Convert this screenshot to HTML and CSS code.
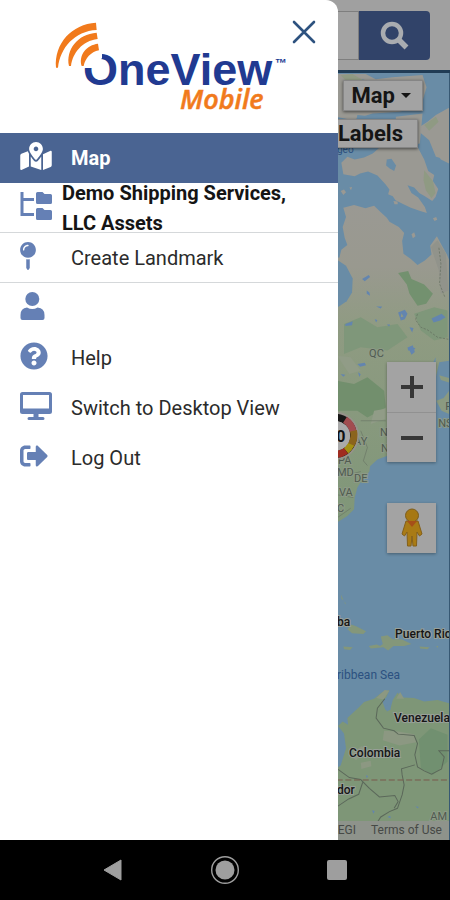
FILE: index.html
```html
<!DOCTYPE html>
<html lang="en">
<head>
<meta charset="utf-8">
<meta name="viewport" content="width=device-width, initial-scale=1">
<title>OneView Mobile</title>
<link rel="stylesheet" href="styles.css">
</head>
<body>
<div class="screen">
  <div class="stage">
    <main class="app">
      <form class="search">
        <input class="search-input" type="text" aria-label="Search">
        <button class="search-button" type="button" aria-label="Find">
          <svg viewBox="0 0 30 30" width="30" height="30"><circle cx="12" cy="12" r="9" fill="none" stroke="#a9acb0" stroke-width="4.5"/><path d="M18.500 18.500L26.500 26.500" stroke="#a9acb0" stroke-width="5.500"/></svg>
        </button>
      </form>
      <section class="map" aria-label="Map">
        <svg class="map-art" viewBox="338 73 112 767" preserveAspectRatio="xMaxYMin slice">
          <defs>
            <linearGradient id="tundra" x1="0" y1="0" x2="0" y2="1">
              <stop offset="0" stop-color="#9a9993"/><stop offset=".18" stop-color="#99998f"/><stop offset=".36" stop-color="#8f9b82"/><stop offset="1" stop-color="#7d9677"/>
            </linearGradient>
          </defs>
          <rect x="330" y="70" width="130" height="780" fill="#698ca6"/>
          <!-- Arctic islands -->
          <g transform="scale(.33333)" fill="#9a9993">
            <path d="M1010 222L1100 222L1130 238L1180 232L1270 225L1282 262L1265 320L1200 335L1120 340L1060 360L1010 350Z"/>
            <path d="M1360 320L1345 325L1310 345L1285 365L1262 380L1260 395L1290 420L1310 470L1350 480Z"/>
            <path d="M1190 350L1270 340L1262 430L1190 445Z"/>
          </g>
          <g transform="scale(.33333)" fill="#8f9a83">
            <path d="M1025 226L1060 222L1100 245L1090 262L1050 250Z"/><path d="M1275 375L1310 350L1318 365L1290 392Z"/>
          </g>
          <g transform="scale(.33333)" fill="#698ca6">
            <path d="M1090 238L1130 250L1200 240L1210 262L1150 275L1085 262Z"/><path d="M1075 345L1150 352L1180 372L1120 384L1070 370Z"/>
          </g>
          <g transform="translate(325 150) scale(.33333)">
            <path fill="#9a9993" d="M52 38L70 20L92 28L120 22L146 10L180 -20L280 -10L300 28L312 62L330 74L326 92L342 116L334 140L324 152L302 138L285 128L270 112L250 105L262 128L282 142L302 170L308 188L288 182L260 172L238 162L214 150L206 138L192 132L196 118L184 102L160 76L132 64L108 70L92 78L58 72Z"/>
            <path fill="#9a9993" d="M325 -20H375V40L350 28L338 10Z"/>
            <path fill="#698ca6" d="M188 28L202 26L216 46L210 62L196 54L186 46Z"/>
            <path fill="#8f9a83" d="M300 60L326 92L334 128L322 144L305 120L298 90Z"/>
            <path fill="#9a9993" d="M50 122l10 -4 6 8 -8 8zM76 112l8-2-3 10zM262 252l8-6 4 12-8 6zM326 204l10-4 3 8-8 4zM208 152l12 2 1 8-10 0z"/>
            <path fill="url(#tundra)" d="M58 172L90 164L124 174L150 166L170 186L188 202L196 214L224 230L240 248L234 272L238 310L260 326L280 344L302 330L322 312L318 286L338 258L352 284L368 312L375 330V795L340 800L334 620L210 900L170 990L130 1020L96 1070L70 1120L62 1150L58 1190L38 1180V320L46 322L52 298L70 284L62 262L56 230L66 200Z"/>
            <path fill="#698ca6" d="M35 325L66 346L86 384L84 426L68 452L35 474Z"/>
            <path fill="#91938b" d="M320 290L340 270L365 310L372 420L350 430L344 360Z"/>
            <path fill="#73916f" d="M222 368L252 362L262 386L300 402L326 430L306 460L280 466L256 430L248 402Z"/>
            <path fill="#7f977a" d="M60 520L110 500L160 530L220 520L250 560L190 600L110 590L60 610ZM270 490L330 470L370 480V560L330 570L290 540Z"/>
            <path fill="#6385af" d="M114 386l20-12 4 6-16 12zM128 420l8 6 2 10-10-6zM156 468l18 0-4 6zM64 520l22-8-2 12-20 2zM222 486l20-8 8 12-8 16-12 4zM232 488l-2 12 8-2zM322 504l30-14 12 10-16 10-20 6zM256 530l12 2-4 14zM188 522h10l-3 6zM152 506l8 2-4 8zM250 590l24 2-6 8-16 0z"/>
            <g fill="none" stroke="#636d5f" stroke-width="2" stroke-dasharray="7 4">
              <path d="M344 292L350 340L346 400L362 440"/><path d="M280 490L274 508L290 530L310 538L340 560L372 566"/>
            </g>
          </g>
          <!-- Great lakes coast, Quebec and the eastern seaboard -->
          <g transform="translate(325 340) scale(.33333)">
            <path fill="#698ca6" d="M375 60L345 65L335 110L336 240L300 300L250 345L190 345L160 356L138 376L136 392L112 420L100 440L92 470L90 505L70 525L38 545V680H375Z"/>
            <path fill="#8b9a80" d="M336 180L358 172L375 150V220L352 210Z"/>
            <path fill="#8b9a80" d="M345 104L375 112V126L350 118Z"/>
            <path fill="#728f6d" d="M38 120L90 130L130 110L180 150L185 200L130 230L100 210L38 210Z"/>
            <path fill="#919c87" d="M40 45L80 50L110 90L76 100ZM150 210L184 204V234L140 250Z"/>
            <path fill="#6385af" d="M100 70l22-4 4 8-18 4zM252 20l14-6 6 20-10 8zM102 95l8 6-4 8zM50 100l14 2-6 6z"/>
            <g fill="none" stroke="#697565" stroke-width="2"><path d="M110 240H185"/><path d="M110 270L130 320L118 360L130 374"/><path d="M38 400L80 400L110 392"/><path d="M42 462L88 470"/><path d="M40 530L80 502"/></g>
          </g>
          <g class="state">
            <text x="370" y="356">QC</text><text x="355" y="444">AY</text><text x="381" y="435">N</text><text x="382" y="451">N</text>
            <text x="339" y="463">PA</text><text x="338" y="475">MD</text><text x="355" y="481">DE</text><text x="340" y="495">VA</text><text x="338" y="511">C</text><text x="439" y="426">NS</text><text x="446" y="409">P</text>
          </g>
          <!-- Caribbean -->
          <g transform="translate(325 550) scale(.33333)" fill="#84977a">
            <path d="M70 234L82 220L98 226L126 240L118 248L84 246ZM58 286L86 288L78 296L60 294ZM134 284L158 280L168 284L176 278L170 256L190 252L206 264L232 264L262 278L240 284L208 284L192 298L178 288L140 292ZM286 286L316 288L310 294L288 292ZM336 284l6 0-2 6zM52 130l6 18-6-6zM62 150l4 10-4-4z"/>
          </g>
          <!-- South America -->
          <g transform="translate(325 690) scale(.33333)">
            <path fill="#7e9677" d="M38 230L50 222L66 170L60 126L42 104L56 90L72 100L70 80L104 48L120 32L150 22L172 4L196 -4L186 18L174 28L184 56L200 48L206 26L220 4L236 18L270 20L300 30L340 26L375 36V400H38Z"/>
            <path fill="#8c9882" d="M156 20L182 -4L196 -2L178 24ZM216 22L228 2L240 22ZM180 118L222 120L270 128L276 152L226 162L176 146ZM74 190L112 164L130 170L96 206ZM110 214L140 208L142 224L112 232Z"/>
            <path fill="#698ca6" d="M184 44L198 38L200 54L188 60Z"/>
            <path fill="#719070" d="M284 144L320 110L370 130V210L326 250L290 230Z"/>
            <g fill="none" stroke="#5b685a" stroke-width="3">
              <path d="M182 22L160 50L156 80L178 110L210 118L222 128L270 132L280 156L272 190L280 226L300 238L322 248L352 232L360 196L344 178L375 178"/><path d="M272 220L232 232L234 250L240 280L234 310L220 350L196 360L170 376L156 398"/><path d="M40 232L76 258L110 264L136 290L166 316L212 312L222 330L210 350"/><path d="M38 346L74 322L104 308L116 272"/>
            </g>
            <path d="M38 265H375" stroke="#78584c" stroke-width="3" stroke-dasharray="18 8"/>
            <path fill="#6385af" d="M144 356l8 2-4 8zM190 376l8-4 2 8zM274 344l10 2-4 4zM126 250l6 4-4 6z"/>
          </g>
          <g class="place">
            <text x="338" y="625">ba</text><text x="396" y="637">Puerto Rico</text><text x="395" y="721">Venezuela</text><text x="350" y="755">Colombia</text><text x="338" y="792">dor</text>
          </g>
          <text class="sea" x="338" y="678">ribbean Sea</text>
          <text class="sea bay" x="338" y="153">geo</text>
          <g class="state"><text x="431" y="818">AM</text></g>
          <g>
            <circle cx="336" cy="435" r="24" fill="#96938b"/>
            <circle cx="336" cy="435" r="18.500" fill="none" stroke="#171717" stroke-width="7"/>
            <path d="M346 419A18.500 18.500 0 0 1 354 431" fill="none" stroke="#a14d50" stroke-width="7"/>
            <path d="M354.500 430A18.500 18.500 0 0 1 352 444" fill="none" stroke="#8b641c" stroke-width="7"/>
            <path d="M352 443.500A18.500 18.500 0 0 1 347 450" fill="none" stroke="#a39013" stroke-width="7"/>
            <path d="M347 450A18.500 18.500 0 0 1 330 452" fill="none" stroke="#a02c20" stroke-width="7"/>
            <circle cx="336" cy="435" r="15" fill="#aaa"/>
            <text class="count" x="328" y="441">10</text>
          </g>
        </svg>
        <div class="map-options">
          <button class="option" type="button">Map <span class="caret"></span></button>
          <button class="option labels" type="button">Labels</button>
        </div>
        <div class="zoom">
          <button type="button" aria-label="Zoom in"><svg width="24" height="24" viewBox="0 0 24 24"><path d="M12 1V23M1 12H23" stroke="#373737" stroke-width="4"/></svg></button>
          <button type="button" aria-label="Zoom out"><svg width="24" height="24" viewBox="0 0 24 24"><path d="M1 12H23" stroke="#373737" stroke-width="4"/></svg></button>
        </div>
        <button class="pegman" type="button" aria-label="Street View">
          <svg width="24" height="40" viewBox="0 0 24 40"><path d="M6 13H18L22 26L19.500 28L17 24L16.500 38H13L12 28L11 38H7.500L7 24L4.500 28L2 26Z" fill="#a97b15" stroke="#84601a"/><circle cx="12" cy="7.500" r="6.500" fill="#a67813" stroke="#7d5d1b"/><path d="M7 13H17L12 19Z" fill="#a65019"/></svg>
        </button>
        <div class="attribution"><span>EGI</span><a href="#terms">Terms of Use</a></div>
      </section>
    </main>

    <aside class="drawer">
      <header class="brand">
        <svg class="logo" viewBox="50 15 240 105" width="240" height="105" role="img" aria-label="OneView Mobile">
          <text class="logo-name" x="83" y="85">OneView</text>
          <path d="M78 44H102V58L95 68H78Z" fill="#fff"/>
          <g transform="translate(40 0) scale(.33333)" fill="#f17a1c">
            <path d="M168 68C96 72 42 130 48 203L54 203C60 144 104 93 170 90Z"/><path d="M170 98C112 102 77 150 87 198L93 198C98 159 126 123 173 117Z"/><path d="M174 131C140 135 115 165 125 198L131 198C136 175 152 156 177 151Z"/>
          </g>
          <text class="logo-tm" x="275" y="67">™</text>
          <text class="logo-sub" x="180" y="109">Mobile</text>
        </svg>
        <button class="close" type="button" aria-label="Close menu"><svg width="24" height="24" viewBox="0 0 24 24"><path d="M2 2L22 22M22 2L2 22" stroke="#2d527f" stroke-width="2.600" stroke-linecap="round"/></svg></button>
      </header>
      <nav class="menu">
        <a class="item active" href="#map"><span class="icon"><svg width="32" height="28" viewBox="0 0 576 512"><path d="M288 0c-69.590 0-126 56.410-126 126 0 56.260 82.350 158.800 113.900 196.020 6.390 7.540 17.820 7.540 24.200 0C331.650 284.800 414 182.260 414 126 414 56.410 357.590 0 288 0zm0 168c-23.200 0-42-18.800-42-42s18.800-42 42-42 42 18.800 42 42-18.800 42-42 42zM20.120 215.950A32 32 0 0 0 0 245.660v250.320c0 11.320 11.430 19.060 21.940 14.860L160 448V214.920c-8.840-15.980-16.070-31.540-21.250-46.420L20.120 215.950zM288 359.670c-14.070 0-27.380-6.180-36.510-16.960-19.660-23.200-40.570-49.620-59.490-76.720v182l192 64V266c-18.920 27.090-39.820 53.520-59.490 76.720-9.130 10.770-22.440 16.950-36.510 16.950zm266.060-198.510L416 224v288l139.880-55.950A32 32 0 0 0 576 426.340V176.020c0-11.320-11.430-19.060-21.940-14.860z"/></svg></span><span>Map</span></a>
        <a class="item assets" href="#assets"><span class="icon"><svg width="32" height="28" viewBox="0 0 32 28"><path d="M2 0V22.500H14M2 7.500H14" fill="none" stroke="currentColor" stroke-width="3"/><path d="M17.500 0h5l2 2h6q1.500 0 1.500 1.500v7q0 1.500-1.500 1.500h-13q-1.500 0-1.500-1.500v-9q0-1.500 1.500-1.500zM17.500 16h5l2 2h6q1.500 0 1.500 1.500v7q0 1.500-1.500 1.500h-13q-1.500 0-1.500-1.500v-9q0-1.500 1.500-1.500z"/></svg></span><span>Demo Shipping Services, LLC Assets</span></a>
        <a class="item lined" href="#landmark"><span class="icon"><svg width="16" height="28" viewBox="0 0 288 512"><path d="M112 316.940v156.690l22.020 33.020c4.750 7.120 15.220 7.120 19.970 0L176 473.630V316.940c-10.390 1.920-21.060 3.060-32 3.060s-21.610-1.140-32-3.060zM144 0C64.470 0 0 64.470 0 144s64.470 144 144 144 144-64.470 144-144S223.530 0 144 0zm0 76c-37.500 0-68 30.500-68 68 0 6.620-5.380 12-12 12s-12-5.380-12-12c0-50.730 41.280-92 92-92 6.620 0 12 5.380 12 12s-5.380 12-12 12z"/></svg></span><span>Create Landmark</span></a>
        <a class="item" href="#account" aria-label="Account"><span class="icon"><svg width="25" height="28" viewBox="0 0 25 28"><circle cx="12.300" cy="7" r="7"/><path d="M7 15.500Q12.300 18.500 17.600 15.500Q24.500 16 24.500 23V26Q24.500 28 22.500 28H2.500Q0.500 28 0.500 26V23Q0.500 16 7 15.500Z"/></svg></span></a>
        <a class="item" href="#help"><span class="icon"><svg width="28" height="28" viewBox="0 0 512 512"><path d="M504 256c0 136.997-111.043 248-248 248S8 392.997 8 256C8 119.083 119.043 8 256 8s248 111.083 248 248zM262.655 90c-54.497 0-89.255 22.957-116.549 63.758-3.536 5.286-2.353 12.415 2.715 16.258l34.699 26.310c5.205 3.947 12.621 3.008 16.665-2.122 17.864-22.658 30.113-35.797 57.303-35.797 20.429 0 45.698 13.148 45.698 32.958 0 14.976-12.363 22.667-32.534 33.976C247.128 238.528 216 254.941 216 296v4c0 6.627 5.373 12 12 12h56c6.627 0 12-5.373 12-12v-1.333c0-28.462 83.186-29.647 83.186-106.667 0-58.002-60.165-102-116.531-102zM256 338c-25.365 0-46 20.635-46 46 0 25.364 20.635 46 46 46s46-20.636 46-46c0-25.365-20.635-46-46-46z"/></svg></span><span>Help</span></a>
        <a class="item" href="#desktop"><span class="icon"><svg width="32" height="28" viewBox="0 0 32 28"><path fill-rule="evenodd" d="M2.500 0H29.500Q32 0 32 2.500V19.500Q32 22 29.500 22H18.500V25H23Q24.500 25 24.500 26.500T23 28H9Q7.500 28 7.500 26.500T9 25H13.500V22H2.500Q0 22 0 19.500V2.500Q0 0 2.500 0ZM3 3V16.500H29V3Z"/></svg></span><span>Switch to Desktop View</span></a>
        <a class="item" href="#logout"><span class="icon"><svg width="28" height="28" viewBox="0 0 512 512"><path d="M497 273L329 441c-15 15-41 4.500-41-17v-96H152c-13.300 0-24-10.700-24-24v-96c0-13.300 10.700-24 24-24h136V88c0-21.400 25.900-32 41-17l168 168c9.300 9.400 9.300 24.600 0 34zM192 436v-40c0-6.600-5.400-12-12-12H96c-17.700 0-32-14.300-32-32V160c0-17.700 14.300-32 32-32h84c6.600 0 12-5.400 12-12V76c0-6.600-5.400-12-12-12H96c-53 0-96 43-96 96v192c0 53 43 96 96 96h84c6.600 0 12-5.400 12-12z"/></svg></span><span>Log Out</span></a>
      </nav>
    </aside>
  </div>
  <footer class="system">
    <button type="button" aria-label="Back"><svg width="28" height="28" viewBox="0 0 28 28"><path d="M5 14L22 4V24Z" fill="#9e9e9e" stroke="#9e9e9e" stroke-linejoin="round"/></svg></button>
    <button type="button" aria-label="Home"><svg width="28" height="28" viewBox="0 0 28 28"><circle cx="14" cy="14" r="13.300" fill="none" stroke="#9e9e9e" stroke-width="1.400"/><circle cx="14" cy="14" r="9.500" fill="#9e9e9e"/></svg></button>
    <button type="button" aria-label="Recent apps"><svg width="28" height="28" viewBox="0 0 28 28"><rect x="4" y="4" width="20" height="20" rx="2" fill="#9e9e9e"/></svg></button>
  </footer>
</div>
</body>
</html>
```
FILE: styles.css
```css
* { box-sizing: border-box; }

body {
  margin: 0;
  font-family: Roboto, "Liberation Sans", sans-serif;
  color: #151515;
}

button {
  margin: 0;
  padding: 0;
  border: 0;
  background: none;
  font: inherit;
  color: inherit;
}

a { color: inherit; text-decoration: none; }
svg { display: block; }

.screen {
  display: flex;
  flex-direction: column;
  min-height: 100vh;
}

.stage { flex: 1; display: grid; }
.app, .drawer { grid-area: 1 / 1; }

.app { display: flex; flex-direction: column; background: #a0a0a0; }

.search {
  display: flex;
  padding: 11px 20px 10px;
  border-bottom: 3px solid #213c55;
}

.search-input {
  flex: 1;
  min-width: 0;
  border: 1px solid #7e7e7e;
  background: #a3a3a3;
}

.search-button {
  display: flex;
  align-items: center;
  justify-content: center;
  width: 71px;
  height: 49px;
  border-radius: 0 4px 4px 0;
  background: #314369;
}

.map {
  position: relative;
  flex: 1;
  overflow: hidden;
  border-right: 1px solid #375873;
  background: #698ca6;
}

.map-art {
  position: absolute;
  top: 0;
  right: 0;
  width: 25%;
  height: 100%;
}

.state { font-size: 11px; fill: #505b50; stroke: #8d9a87; stroke-width: 2px; paint-order: stroke; }
.place { font-size: 12px; font-weight: 500; fill: #151515; stroke: #98a098; stroke-width: 2px; paint-order: stroke; }
.sea { font-size: 12px; fill: #2c5180; }
.bay { font-size: 10px; }
.count { font-size: 16px; font-weight: 700; fill: #111; }

.map-options {
  position: absolute;
  top: 7px;
  right: 26px;
  display: grid;
  justify-items: end;
  gap: 8px;
}

.option {
  display: flex;
  align-items: center;
  gap: 6px;
  height: 31px;
  padding: 0 11px 0 8px;
  border: 1px solid #858585;
  background: #a3a3a3;
  box-shadow: 0 1px 3px #0008;
  font-size: 22px;
  font-weight: 700;
}

.labels { height: 29px; margin-right: 5px; padding: 0 14px 0 30px; }

.caret {
  border: 5px solid transparent;
  border-top-color: #151515;
  border-bottom: 0;
}

.zoom {
  position: absolute;
  top: 289px;
  right: 13px;
  display: grid;
  width: 49px;
  background: #a3a3a3;
  box-shadow: 0 1px 3px #0005;
}

.zoom button, .pegman {
  display: flex;
  align-items: center;
  justify-content: center;
  height: 50px;
}

.zoom button + button { border-top: 1px solid #919191; }

.pegman {
  position: absolute;
  top: 430px;
  right: 13px;
  width: 49px;
  background: #a3a3a3;
  box-shadow: 0 1px 3px #0005;
}

.attribution {
  position: absolute;
  right: 0;
  bottom: 0;
  display: flex;
  gap: 15px;
  padding: 0 7px;
  background: #8e938b;
  color: #464946;
  font-size: 12px;
  line-height: 19px;
}

.drawer {
  position: relative;
  width: 75%;
  border-top-right-radius: 12px;
  background: #fff;
}

.brand {
  display: flex;
  align-items: flex-start;
  height: 133px;
  padding: 15px 20px 0 50px;
}

.logo { flex: none; }
.logo-name { font: bold 45px "Liberation Sans", sans-serif; fill: #213a91; }
.logo-tm { font: bold 12px "Liberation Sans", sans-serif; fill: #213a91; }
.logo-sub { font: italic 600 27px "Open Sans", sans-serif; fill: #f17a1c; stroke: #f17a1c; stroke-width: 0.5px; }

.close {
  position: absolute;
  top: 20px;
  right: 22px;
}

.item {
  display: flex;
  align-items: center;
  height: 50px;
  padding: 0 32px 0 20px;
  font-size: 20px;
  line-height: 30px;
  color: #2b2b2b;
}

.icon { flex: none; width: 51px; padding-bottom: 4px; color: #6580b5; }
.icon svg { fill: currentColor; }
.active { background: #4a6492; color: #fff; font-weight: 700; }
.active .icon { color: #fff; }
.assets { font-weight: 700; color: #151515; border-bottom: 1px solid #d5d8da; }
.assets .icon { width: 42px; }
.lined { border-bottom: 1px solid #d5d8da; }

.system {
  display: flex;
  align-items: center;
  justify-content: space-around;
  height: 60px;
  padding: 0 57px;
  background: #000;
}
```
